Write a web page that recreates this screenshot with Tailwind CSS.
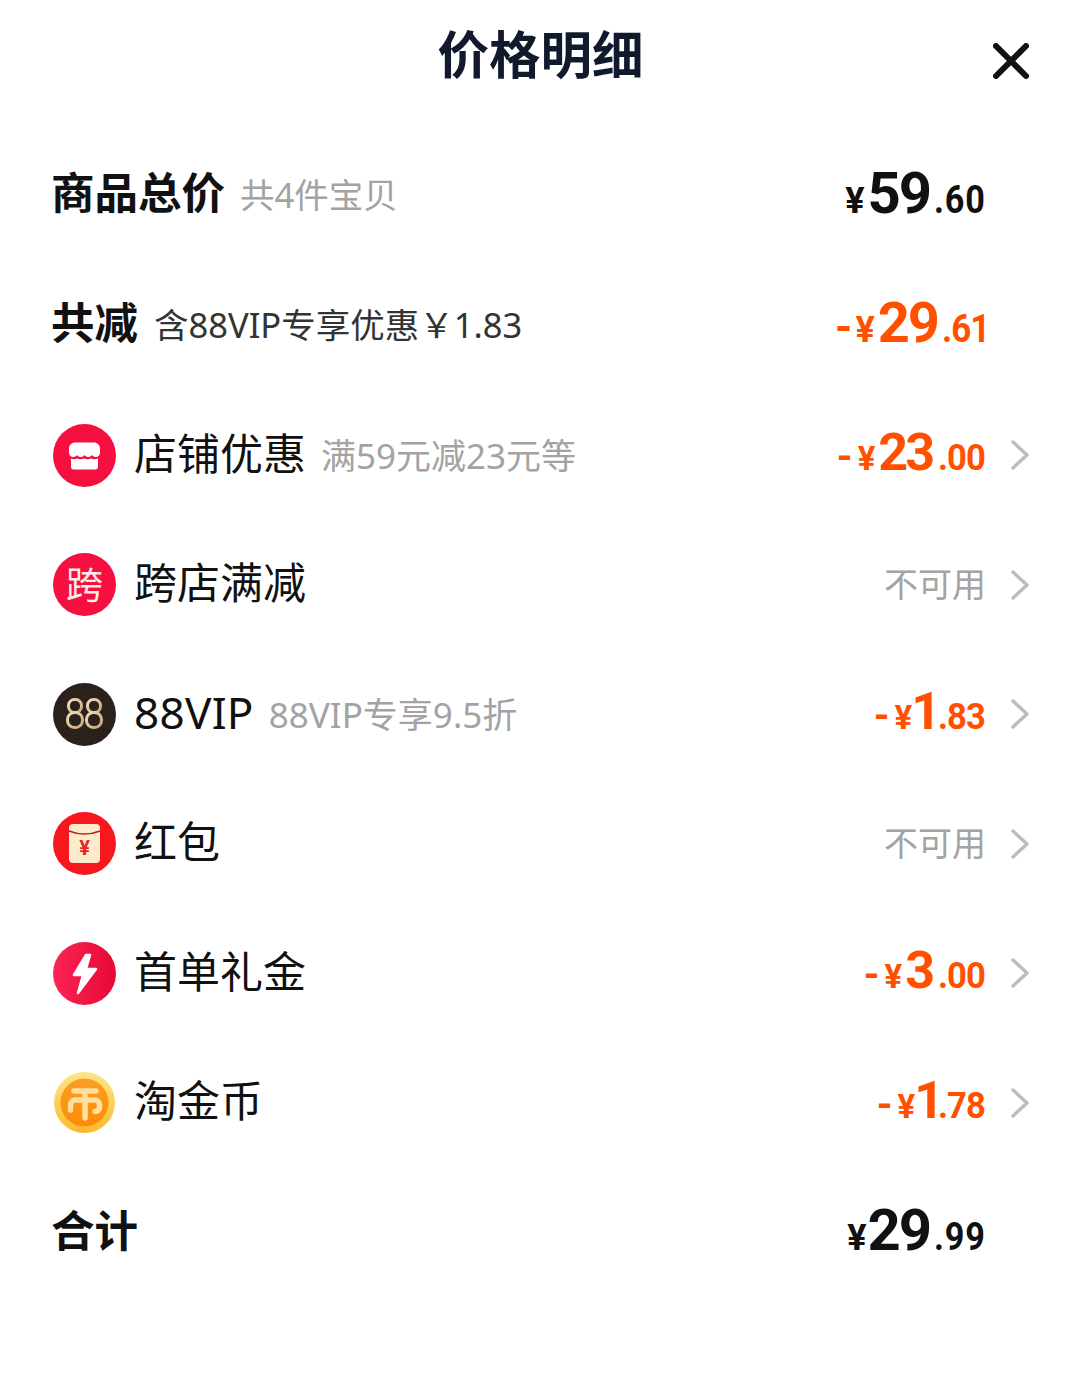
<!DOCTYPE html>
<html lang="zh-CN">
  <head>
    <meta charset="UTF-8">
    <title>价格明细</title>
    <script src="https://cdn.jsdelivr.net/npm/@tailwindcss/browser@4"></script>
  </head>
  <body class="bg-white font-['Noto_Sans','Noto_Sans_CJK_SC',sans-serif] text-[#111]">
    <div class="w-[1079px] h-[1389px] overflow-hidden pl-[53px] pr-[50px]">
      <header class="relative h-[130px] flex justify-center pt-[17px]">
        <h1 class="-ml-[1px] text-[51.5px] leading-[74px] font-bold text-[#11192d]">价格明细</h1>
        <svg class="absolute right-0 top-[43px] w-[36px] h-[36px]" viewBox="0 0 36 36" fill="none" stroke="#111" stroke-width="6" stroke-linecap="round"><path d="M3 3l30 30M33 3L3 33"/></svg>
      </header>

      <div class="h-[130px] flex items-center">
        <span class="-ml-[2px] mb-[4px] text-[43.5px] font-bold leading-none">商品总价</span>
        <span class="ml-[15px] text-[34.5px] text-[#a3a3a3] leading-none">共4件宝贝</span>
        <div class="ml-auto mr-[42px] mt-[2px] flex items-baseline font-['Roboto'] font-bold text-[#111] tracking-[-1px]">
          <span class="text-[36px] mr-[4px]">¥</span><span class="text-[58px] leading-none tracking-[-2px]">59</span><span class="ml-[4px] w-[53px] origin-left scale-x-[.9] text-[38px] tracking-[1px]">.60</span>
        </div>
      </div>

      <div class="h-[130px] flex items-center">
        <span class="-ml-[2px] mb-[4px] text-[43.5px] font-bold leading-none">共减</span>
        <span class="ml-[16px] text-[34.5px] text-[#333] leading-none">含88VIP专享优惠￥1.83</span>
        <div class="ml-auto mr-[41px] mt-[3px] flex items-baseline font-['Roboto'] font-bold text-[#ff5000] tracking-[-1px]">
          <span class="text-[44px] leading-none mr-[4px]">-</span><span class="text-[36px] mr-[4px]">¥</span><span class="text-[56px] leading-none tracking-[-2px]">29</span><span class="ml-[4px] w-[46px] origin-left scale-x-[.92] text-[38px]">.61</span>
        </div>
      </div>

      <div class="h-[130px] flex items-center">
        <svg class="w-[63px] h-[63px] shrink-0" viewBox="0 0 63 63"><circle cx="31.5" cy="31.5" r="31.5" fill="#f5103f"/><path fill="#fff" d="M22 18.500h19c3 0 6 2.500 6 6v4c0 3-2 4.500-4 4.500-1.500 0-3-.5-4-2-1 1.500-2.500 2-3.700 2s-2.800-.5-3.800-2c-1 1.500-2.500 2-3.800 2s-2.700-.5-3.700-2c-1 1.500-2.500 2-4 2-2 0-4-1.500-4-4.500v-4c0-3.500 3-6 6-6z"/><path fill="#fff" d="M18 34.500c2 1 4 1 6 0 2 1 5 1 7 0 2 1 5 1 7 0 2 1 5 1 7 0v8.500c0 1.500-1 2.500-2.500 2.500h-22c-1.500 0-2.500-1-2.500-2.500z"/></svg>
        <span class="ml-[18px] mb-[4px] text-[43px] leading-none">店铺优惠</span>
        <span class="ml-[15px] text-[35px] text-[#a3a3a3] leading-none">满59元减23元等</span>
        <div class="ml-auto flex items-center">
          <div class="mt-[2px] flex items-baseline font-['Roboto'] font-bold text-[#ff5000] tracking-[-1px]">
            <span class="text-[40px] leading-none mr-[6px]">-</span><span class="text-[33px] mr-[4px]">¥</span><span class="text-[52px] leading-none tracking-[-3px]">23</span><span class="ml-[6px] w-[47px] origin-left scale-x-[.96] text-[36px]">.00</span>
          </div>
          <svg class="ml-[26px] w-[18px] h-[30px]" viewBox="0 0 18 30" fill="none" stroke="#bdbdbd" stroke-width="3.5" stroke-linecap="round" stroke-linejoin="round"><path d="M2 2l14 13L2 28"/></svg>
        </div>
      </div>

      <div class="h-[129.5px] flex items-center">
        <div class="w-[63px] h-[63px] shrink-0 rounded-full bg-[#f5103f] flex items-center justify-center text-[37px] leading-none text-[#ffe9e9]">跨</div>
        <span class="ml-[18px] mb-[4px] text-[43px] leading-none">跨店满减</span>
        <div class="ml-auto flex items-center">
          <span class="mb-[2px] text-[34px] text-[#a3a3a3] leading-none">不可用</span>
          <svg class="ml-[25px] w-[18px] h-[30px]" viewBox="0 0 18 30" fill="none" stroke="#bdbdbd" stroke-width="3.5" stroke-linecap="round" stroke-linejoin="round"><path d="M2 2l14 13L2 28"/></svg>
        </div>
      </div>

      <div class="h-[129.5px] flex items-center">
        <svg class="w-[63px] h-[63px] shrink-0" viewBox="0 0 63 63" fill="none"><defs><linearGradient id="gold" x1="0" x2="1" y1="0" y2="1"><stop offset="0" stop-color="#f0dcb8"/><stop offset="1" stop-color="#c7a578"/></linearGradient></defs><circle cx="31.5" cy="31.5" r="31.5" fill="#2a211d"/><g stroke="url(#gold)" stroke-width="3"><rect x="15.500" y="16.500" width="13" height="13" rx="6"/><rect x="14.500" y="29.500" width="15" height="15" rx="7"/><rect x="34.500" y="16.500" width="13" height="13" rx="6"/><rect x="33.500" y="29.500" width="15" height="15" rx="7"/></g></svg>
        <span class="ml-[18px] mb-[4px] text-[44px] leading-none tracking-[0.3px]">88VIP</span>
        <span class="ml-[15px] text-[35px] text-[#a3a3a3] leading-none">88VIP专享9.5折</span>
        <div class="ml-auto flex items-center">
          <div class="mt-[2px] flex items-baseline font-['Roboto'] font-bold text-[#ff5000] tracking-[-1px]">
            <span class="text-[40px] leading-none mr-[6px]">-</span><span class="text-[33px]">¥</span><span class="text-[52px] leading-none tracking-[-9px]">1</span><span class="ml-[6px] w-[47px] origin-left scale-x-[.96] text-[36px]">.83</span>
          </div>
          <svg class="ml-[26px] w-[18px] h-[30px]" viewBox="0 0 18 30" fill="none" stroke="#bdbdbd" stroke-width="3.5" stroke-linecap="round" stroke-linejoin="round"><path d="M2 2l14 13L2 28"/></svg>
        </div>
      </div>

      <div class="h-[129.5px] flex items-center">
        <svg class="w-[63px] h-[63px] shrink-0" viewBox="0 0 63 63"><circle cx="31.5" cy="31.5" r="31.5" fill="#f8161f"/><rect x="16" y="12" width="31" height="39" rx="4" fill="#fdeccb"/><path d="M16 19c10 4 21 4 31 0" fill="none" stroke="#b3261f" stroke-width="1.500"/><text x="31.500" y="43" text-anchor="middle" font-size="20" font-weight="700" fill="#e4262a" font-family="Roboto">¥</text></svg>
        <span class="ml-[18px] mb-[4px] text-[43px] leading-none">红包</span>
        <div class="ml-auto flex items-center">
          <span class="mb-[2px] text-[34px] text-[#a3a3a3] leading-none">不可用</span>
          <svg class="ml-[25px] w-[18px] h-[30px]" viewBox="0 0 18 30" fill="none" stroke="#bdbdbd" stroke-width="3.5" stroke-linecap="round" stroke-linejoin="round"><path d="M2 2l14 13L2 28"/></svg>
        </div>
      </div>

      <div class="h-[129.5px] flex items-center">
        <svg class="w-[63px] h-[63px] shrink-0" viewBox="0 0 63 63"><defs><linearGradient id="bolt" x1="0" x2="1" y1="0" y2="0"><stop offset="0" stop-color="#fb2456"/><stop offset="1" stop-color="#e60a35"/></linearGradient></defs><circle cx="31.5" cy="31.5" r="31.5" fill="url(#bolt)"/><path fill="#fff" stroke="#fff" stroke-width="2.500" stroke-linejoin="round" d="M33 13h4l-4 14h10L25 51l5-18h-9z"/></svg>
        <span class="ml-[18px] mb-[4px] text-[43px] leading-none">首单礼金</span>
        <div class="ml-auto flex items-center">
          <div class="mt-[2px] flex items-baseline font-['Roboto'] font-bold text-[#ff5000] tracking-[-1px]">
            <span class="text-[40px] leading-none mr-[6px]">-</span><span class="text-[33px] mr-[4px]">¥</span><span class="text-[52px] leading-none tracking-[-3px]">3</span><span class="ml-[6px] w-[47px] origin-left scale-x-[.96] text-[36px]">.00</span>
          </div>
          <svg class="ml-[26px] w-[18px] h-[30px]" viewBox="0 0 18 30" fill="none" stroke="#bdbdbd" stroke-width="3.5" stroke-linecap="round" stroke-linejoin="round"><path d="M2 2l14 13L2 28"/></svg>
        </div>
      </div>

      <div class="h-[129.5px] flex items-center">
        <svg class="w-[63px] h-[63px] shrink-0" viewBox="0 0 63 63" fill="none"><defs><linearGradient id="rim" x1="0" x2="0" y1="0" y2="1"><stop offset="0" stop-color="#fde68a"/><stop offset="1" stop-color="#fdb92c"/></linearGradient><linearGradient id="face" x1="0" x2="0" y1="0" y2="1"><stop offset="0" stop-color="#fb9f24"/><stop offset="1" stop-color="#ff8a05"/></linearGradient></defs><circle cx="31.500" cy="31.500" r="30.500" fill="url(#rim)"/><circle cx="31.500" cy="31.500" r="24" fill="url(#face)"/><g stroke="#ffdf9e" stroke-width="5.500" stroke-linecap="round"><path d="M21 20h22M32 21v26M17.500 39v-5c0-3 2-5 5-5h19c3 0 5 2 5 5v2c0 3-2 4.500-4.500 4.500"/></g></svg>
        <span class="ml-[18px] mb-[4px] text-[43px] leading-none">淘金币</span>
        <div class="ml-auto flex items-center">
          <div class="mt-[2px] flex items-baseline font-['Roboto'] font-bold text-[#ff5000] tracking-[-1px]">
            <span class="text-[40px] leading-none mr-[6px]">-</span><span class="text-[33px]">¥</span><span class="text-[52px] leading-none tracking-[-12px]">1</span><span class="ml-[6px] w-[47px] origin-left scale-x-[.96] text-[36px]">.78</span>
          </div>
          <svg class="ml-[26px] w-[18px] h-[30px]" viewBox="0 0 18 30" fill="none" stroke="#bdbdbd" stroke-width="3.5" stroke-linecap="round" stroke-linejoin="round"><path d="M2 2l14 13L2 28"/></svg>
        </div>
      </div>

      <div class="h-[130px] flex items-center">
        <span class="-ml-[2px] mb-[4px] text-[43.5px] font-bold leading-none">合计</span>
        <div class="ml-auto mr-[42px] mt-[2px] flex items-baseline font-['Roboto'] font-bold text-[#111] tracking-[-1px]">
          <span class="text-[36px] mr-[2px]">¥</span><span class="text-[58px] leading-none tracking-[-2px]">29</span><span class="ml-[4px] w-[53px] origin-left scale-x-[.9] text-[38px] tracking-[1px]">.99</span>
        </div>
      </div>
    </div>
  </body>
</html>
